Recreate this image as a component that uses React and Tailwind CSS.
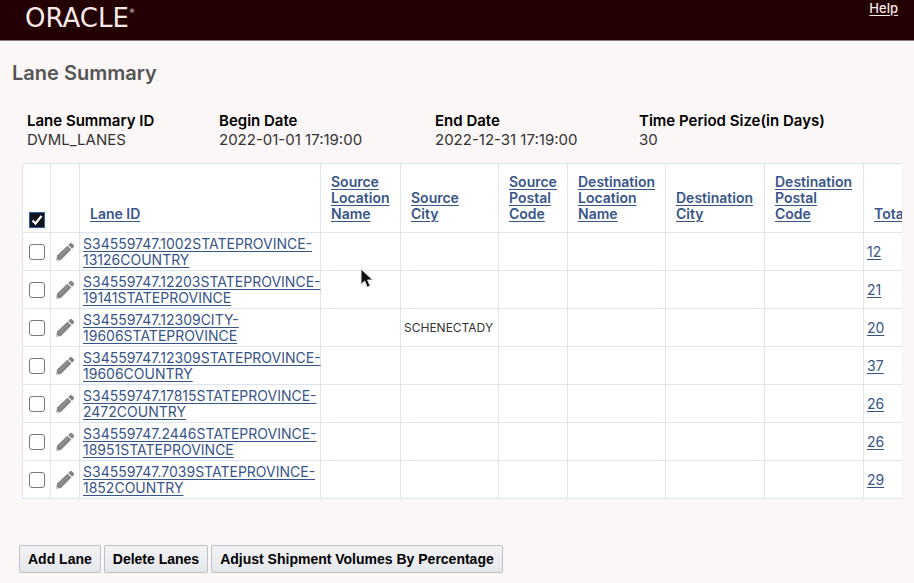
import { useState } from "react";

const details = [
  { label: "Lane Summary ID", value: "DVML_LANES" },
  { label: "Begin Date", value: "2022-01-01 17:19:00" },
  { label: "End Date", value: "2022-12-31 17:19:00" },
  { label: "Time Period Size(in Days)", value: "30" },
];

const columns = [
  ["Lane ID"],
  ["Source", "Location", "Name"],
  ["Source", "City"],
  ["Source", "Postal", "Code"],
  ["Destination", "Location", "Name"],
  ["Destination", "City"],
  ["Destination", "Postal", "Code"],
  ["Total"],
];

const lanes = [
  { from: "S34559747.1002STATEPROVINCE-", to: "13126COUNTRY", city: "", total: 12 },
  { from: "S34559747.12203STATEPROVINCE-", to: "19141STATEPROVINCE", city: "", total: 21 },
  { from: "S34559747.12309CITY-", to: "19606STATEPROVINCE", city: "SCHENECTADY", total: 20 },
  { from: "S34559747.12309STATEPROVINCE-", to: "19606COUNTRY", city: "", total: 37 },
  { from: "S34559747.17815STATEPROVINCE-", to: "2472COUNTRY", city: "", total: 26 },
  { from: "S34559747.2446STATEPROVINCE-", to: "18951STATEPROVINCE", city: "", total: 26 },
  { from: "S34559747.7039STATEPROVINCE-", to: "1852COUNTRY", city: "", total: 29 },
];

const cell = "border border-[#dfe4ee] p-0";
const link = "text-[#38558a] underline underline-offset-2";

function Pencil() {
  return (
    <svg viewBox="0 0 20 20" className="mx-auto block size-5" aria-hidden="true">
      <path d="M.8 19.2l1.5-5.9L12.4 3.7l4 3.8L6.2 17.7z" fill="#858587" />
      <path d="M13.2 3l1.9-1.8q.9-.8 1.8.1l1.9 1.9q.8.8 0 1.7L17.1 6.8z" fill="#858587" />
      <path d="M.8 19.2l.8-2.9 2.1 2.1z" fill="#d5d5d8" />
      <path d="M4.2 14.8l9-8.7" stroke="#9c9c9f" strokeWidth="1" />
    </svg>
  );
}

function Tick({ label, checked, onChange }) {
  return (
    <span className="relative mx-auto block size-4">
      <input
        type="checkbox"
        aria-label={label}
        checked={checked}
        onChange={onChange}
        className="peer block size-4 appearance-none rounded-[3px] border border-[#777777] bg-white checked:rounded-none checked:border-[#2f5da8] checked:bg-[#10141c]"
      />
      <svg
        viewBox="0 0 16 16"
        className="pointer-events-none absolute inset-0 hidden size-4 peer-checked:block"
        aria-hidden="true"
      >
        <path d="M3.5 8.5l3 3 6-7.5" fill="none" stroke="#ffffff" strokeWidth="2.2" />
      </svg>
    </span>
  );
}

export default function App() {
  const [all, setAll] = useState(true);
  const [picked, setPicked] = useState([]);
  const toggle = (i) =>
    setPicked((p) => (p.includes(i) ? p.filter((n) => n !== i) : [...p, i]));

  return (
    <div className="relative min-h-screen bg-[#fbf7f6] font-['Inter','Liberation_Sans',sans-serif] text-black">
      <header className="flex h-[41px] items-start justify-between border-b border-[#8d7c7c] bg-[#230003] pr-4 pl-[25px] text-[#f7e9e7]">
        <div className="flex pt-1 font-['DejaVu_Sans',sans-serif] text-[26px] leading-7">
          ORACLE<sup className="top-0 pt-1 text-[6px] leading-none">®</sup>
        </div>
        <a href="#help" className="text-[13px] leading-[17px] font-medium underline underline-offset-2">
          Help
        </a>
      </header>

      <main className="pb-3">
        <h1 className="pt-5 pl-3 text-xl leading-6 font-semibold text-[#555555]">Lane Summary</h1>

        <dl className="grid grid-cols-[192px_216px_204px_1fr] pt-[26px] pl-[27px]">
          {details.map((d) => (
            <div key={d.label} className="text-[15px] leading-[19px]">
              <dt className="font-semibold">{d.label}</dt>
              <dd className="text-[#333333]">{d.value}</dd>
            </div>
          ))}
        </dl>

        <div className="mt-[14px] mr-3 ml-[22px] overflow-hidden">
          <table className="w-full min-w-[900px] table-fixed border-collapse bg-white text-left">
            <colgroup>
              <col className="w-7" />
              <col className="w-[29px]" />
              <col className="w-[241px]" />
              <col className="w-20" />
              <col className="w-[98px]" />
              <col className="w-[69px]" />
              <col className="w-[98px]" />
              <col className="w-[99px]" />
              <col className="w-[99px]" />
              <col />
            </colgroup>
            <thead>
              <tr className="h-[69px]">
                <th className={`${cell} pb-1 align-bottom`}>
                  <Tick label="Select all lanes" checked={all} onChange={() => setAll(!all)} />
                </th>
                <th className={cell} aria-label="Edit" />
                {columns.map((words) => (
                  <th
                    key={words.join(" ")}
                    className={`${cell} pb-[10px] pl-[10px] align-bottom text-sm leading-4 font-semibold`}
                  >
                    <a href="#sort" className={link}>
                      {words.map((w) => (
                        <span key={w} className="block">
                          {w}
                        </span>
                      ))}
                    </a>
                  </th>
                ))}
              </tr>
            </thead>
            <tbody>
              {lanes.map((lane, i) => (
                <tr key={lane.from} className="h-[38px]">
                  <td className={cell}>
                    <Tick
                      label={`Select ${lane.from}${lane.to}`}
                      checked={picked.includes(i)}
                      onChange={() => toggle(i)}
                    />
                  </td>
                  <td className={cell}>
                    <button type="button" aria-label="Edit lane" className="block w-full">
                      <Pencil />
                    </button>
                  </td>
                  <td className={`${cell} pl-[3px] text-sm leading-4 whitespace-nowrap`}>
                    <a href="#lane" className={link}>
                      {lane.from}
                      <br />
                      {lane.to}
                    </a>
                  </td>
                  <td className={cell} />
                  <td className={`${cell} pl-[3px] text-xs whitespace-nowrap text-[#333333]`}>{lane.city}</td>
                  <td className={cell} />
                  <td className={cell} />
                  <td className={cell} />
                  <td className={cell} />
                  <td className={`${cell} pl-[3px] text-sm`}>
                    <a href="#total" className={link}>
                      {lane.total}
                    </a>
                  </td>
                </tr>
              ))}
            </tbody>
          </table>
        </div>

        <div className="mt-[46px] ml-[19px] flex gap-[3px] font-['Liberation_Sans',Arial,sans-serif] text-sm font-bold">
          {["Add Lane", "Delete Lanes", "Adjust Shipment Volumes By Percentage"].map((b) => (
            <button
              key={b}
              type="button"
              className="h-7 rounded-xs border border-[#bfc1c6] bg-linear-to-b from-[#f3f3f6] to-[#e6e7eb] px-2"
            >
              {b}
            </button>
          ))}
        </div>
      </main>

      <svg
        viewBox="0 0 14 21"
        className="pointer-events-none absolute top-[268px] left-[360px] h-[21px] w-[14px]"
        aria-hidden="true"
      >
        <path
          d="M1 1v15.5l3.7-3.4 2.5 6.2 3-1.3-2.6-6h5.2z"
          fill="#111111"
          stroke="#e8e8e8"
          strokeWidth="1"
        />
      </svg>
    </div>
  );
}
